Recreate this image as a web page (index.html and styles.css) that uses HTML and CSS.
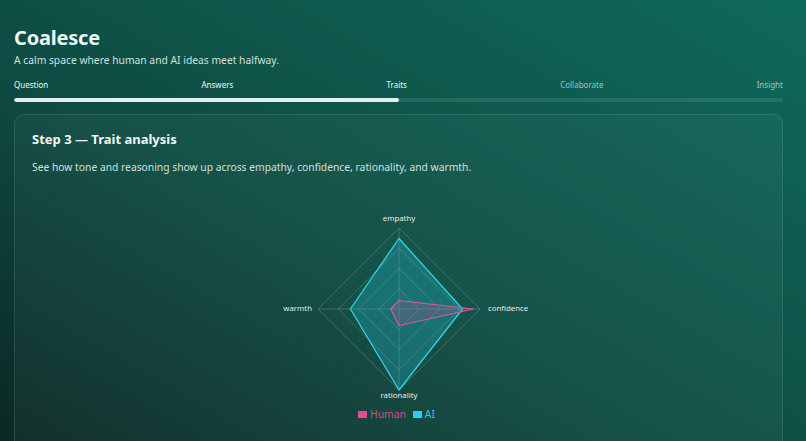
FILE: index.html
```html
<!DOCTYPE html>
<html lang="en">
<head>
    <meta charset="UTF-8">
    <meta name="viewport" content="width=device-width, initial-scale=1.0">
    <title>Coalesce</title>
    <link rel="stylesheet" href="styles.css">
</head>
<body>
    <div class="app">
        <header class="app-header">
            <h1 class="app-title">Coalesce</h1>
            <p class="app-subtitle">A calm space where human and AI ideas meet halfway.</p>
        </header>

        <nav class="steps">
            <div class="step-labels">
                <span class="step-label done">Question</span>
                <span class="step-label done">Answers</span>
                <span class="step-label done">Traits</span>
                <span class="step-label">Collaborate</span>
                <span class="step-label">Insight</span>
            </div>
            <div class="step-track">
                <div class="step-fill" style="width: 50%"></div>
            </div>
        </nav>

        <section class="card">
            <h2 class="card-title">Step 3 — Trait analysis</h2>
            <p class="card-text">See how tone and reasoning show up across empathy, confidence, rationality, and warmth.</p>

            <div class="chart">
                <svg class="radar" width="300" height="192" viewBox="0 0 300 192">
                    <g class="grid">
                        <polygon points="150,18 231,99 150,180 69,99"/>
                        <polygon points="150,38.25 210.75,99 150,159.75 89.25,99"/>
                        <polygon points="150,58.5 190.5,99 150,139.5 109.5,99"/>
                        <polygon points="150,78.75 170.25,99 150,119.25 129.75,99"/>
                        <line x1="150" y1="99" x2="150" y2="18"/>
                        <line x1="150" y1="99" x2="231" y2="99"/>
                        <line x1="150" y1="99" x2="150" y2="180"/>
                        <line x1="150" y1="99" x2="69" y2="99"/>
                    </g>
                    <polygon class="series-ai" points="150,28.5 213.5,99 150,180 101.4,99"/>
                    <polygon class="series-human" points="150,90.5 224.5,99 150,115.5 141.9,99"/>
                    <g class="axis-labels">
                        <text x="150" y="11" text-anchor="middle">empathy</text>
                        <text x="239" y="99" dominant-baseline="middle">confidence</text>
                        <text x="150" y="188" text-anchor="middle">rationality</text>
                        <text x="63" y="99" text-anchor="end" dominant-baseline="middle">warmth</text>
                    </g>
                </svg>
                <div class="legend">
                    <span class="legend-item human"><i class="swatch"></i>Human</span>
                    <span class="legend-item ai"><i class="swatch"></i>AI</span>
                </div>
            </div>
        </section>
    </div>
</body>
</html>
```

FILE: styles.css
```css
* {
    margin: 0;
    padding: 0;
    box-sizing: border-box;
}

html, body {
    height: 100%;
}

body {
    font-family: "Noto Sans", "Open Sans", sans-serif;
    color: #e8f1ef;
    background: linear-gradient(30deg, #0b2824 0%, #0e4a41 40%, #0f6a5b 100%);
    overflow: hidden;
}

.app {
    padding: 26px 23px 0 14px;
}

.app-title {
    font-size: 20px;
    line-height: 24px;
    font-weight: 700;
    letter-spacing: -0.2px;
    color: #eef5f3;
}

.app-subtitle {
    margin-top: 3px;
    font-size: 10.3px;
    line-height: 14px;
    color: #cfe0dc;
}

.steps {
    margin-top: 12px;
}

.step-labels {
    display: flex;
    justify-content: space-between;
    font-size: 8px;
    line-height: 11px;
}

.step-label {
    color: rgba(220, 236, 232, 0.72);
}

.step-label.done {
    color: #eef5f3;
}

.step-track {
    margin-top: 8px;
    height: 4px;
    border-radius: 2px;
    background-color: rgba(255, 255, 255, 0.1);
    overflow: hidden;
}

.step-fill {
    height: 100%;
    border-radius: 2px;
    background-color: #e3eef0;
}

.card {
    margin-top: 12px;
    height: 340px;
    padding: 14px 17px 0;
    border: 1px solid rgba(255, 255, 255, 0.1);
    border-radius: 10px;
    background-color: rgba(255, 255, 255, 0.035);
}

.card-title {
    font-size: 13px;
    line-height: 20px;
    font-weight: 700;
    color: #f1f7f5;
}

.card-text {
    margin-top: 10px;
    font-size: 10.3px;
    line-height: 16px;
    color: #cfe0dc;
}

.chart {
    margin-top: 35px;
    display: flex;
    flex-direction: column;
    align-items: center;
}

.radar .grid polygon,
.radar .grid line {
    fill: none;
    stroke: rgba(200, 225, 218, 0.22);
    stroke-width: 1;
}

.series-ai {
    fill: rgba(34, 211, 238, 0.25);
    stroke: #2dd4e6;
    stroke-width: 1.3;
    stroke-linejoin: round;
}

.series-human {
    fill: rgba(236, 72, 153, 0.2);
    stroke: #d9589a;
    stroke-width: 1.2;
    stroke-linejoin: round;
}

.axis-labels text {
    font-family: "Noto Sans", "Open Sans", sans-serif;
    font-size: 7.8px;
    fill: #e0ebe8;
}

.legend {
    margin-top: 5px;
    margin-right: 4px;
    display: flex;
    gap: 7px;
    font-size: 10.3px;
    line-height: 14px;
}

.legend-item {
    display: flex;
    align-items: center;
    gap: 3px;
}

.swatch {
    display: inline-block;
    width: 9px;
    height: 7px;
}

.legend-item.human {
    color: #d9468f;
}

.legend-item.human .swatch {
    background-color: #ec4899;
}

.legend-item.ai {
    color: #26cfe6;
}

.legend-item.ai .swatch {
    background-color: #22d3ee;
}
```
